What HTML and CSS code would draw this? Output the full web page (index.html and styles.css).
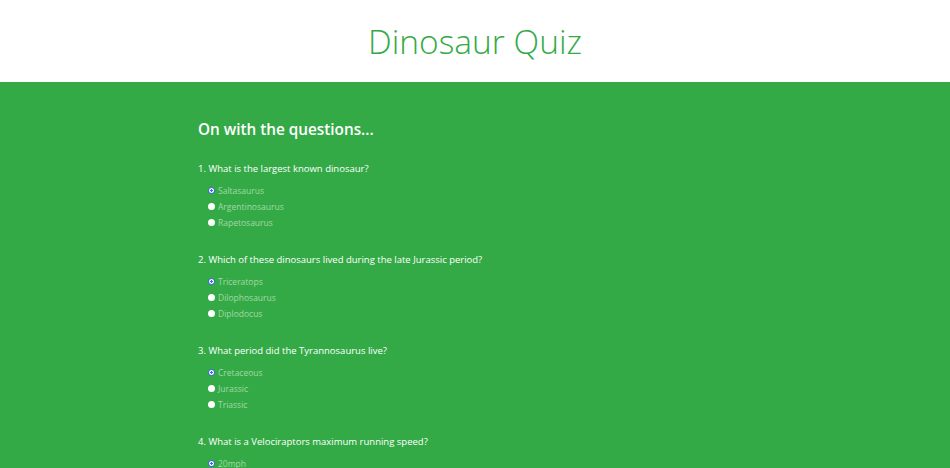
FILE: index.html
```html
<!DOCTYPE html>
<html lang="en">
<head>
<meta charset="utf-8">
<title>Dinosaur Quiz</title>
<link rel="stylesheet" href="styles.css">
</head>
<body>
<header class="site-header">
  <h1 class="site-title">Dinosaur Quiz</h1>
</header>
<main class="quiz">
  <div class="quiz-inner">
    <h2 class="quiz-heading">On with the questions...</h2>

    <section class="question">
      <p class="question-text">1. What is the largest known dinosaur?</p>
      <ul class="options">
        <li><label><input type="radio" name="q1" checked> Saltasaurus</label></li>
        <li><label><input type="radio" name="q1"> Argentinosaurus</label></li>
        <li><label><input type="radio" name="q1"> Rapetosaurus</label></li>
      </ul>
    </section>

    <section class="question">
      <p class="question-text">2. Which of these dinosaurs lived during the late Jurassic period?</p>
      <ul class="options">
        <li><label><input type="radio" name="q2" checked> Triceratops</label></li>
        <li><label><input type="radio" name="q2"> Dilophosaurus</label></li>
        <li><label><input type="radio" name="q2"> Diplodocus</label></li>
      </ul>
    </section>

    <section class="question">
      <p class="question-text">3. What period did the Tyrannosaurus live?</p>
      <ul class="options">
        <li><label><input type="radio" name="q3" checked> Cretaceous</label></li>
        <li><label><input type="radio" name="q3"> Jurassic</label></li>
        <li><label><input type="radio" name="q3"> Triassic</label></li>
      </ul>
    </section>

    <section class="question">
      <p class="question-text">4. What is a Velociraptors maximum running speed?</p>
      <ul class="options">
        <li><label><input type="radio" name="q4" checked> 20mph</label></li>
        <li><label><input type="radio" name="q4"> 40mph</label></li>
        <li><label><input type="radio" name="q4"> 60mph</label></li>
      </ul>
    </section>
  </div>
</main>
</body>
</html>
```
FILE: styles.css
```css
html, body {
  margin: 0;
  padding: 0;
}
body {
  font-family: "Open Sans", "Noto Sans", sans-serif;
  background: #34aa47;
}
.site-header {
  background: #ffffff;
  height: 82px;
  display: flex;
  align-items: center;
  justify-content: center;
}
.site-title {
  margin: 0;
  font-weight: 300;
  font-size: 33.5px;
  color: #34aa47;
}
.quiz {
  background: #34aa47;
  padding-top: 35px;
  min-height: 400px;
}
.quiz-inner {
  width: 554px;
  margin: 0 auto;
}
.quiz-heading {
  margin: 0 0 21px;
  font-size: 15.3px;
  font-weight: 600;
  color: #ffffff;
  line-height: 24px;
}
.question {
  margin-bottom: 23px;
}
.question-text {
  margin: 0 0 6px;
  font-size: 9.5px;
  color: #ffffff;
  line-height: 14px;
}
.options {
  list-style: none;
  margin: 0;
  padding: 0 0 0 10px;
}
.options li {
  height: 16px;
  display: flex;
  align-items: center;
}
.options label {
  display: flex;
  align-items: center;
  gap: 3px;
  font-size: 8.5px;
  color: #a3d8a6;
}
.options input {
  appearance: none;
  -webkit-appearance: none;
  margin: 0;
  width: 7px;
  height: 7px;
  border-radius: 50%;
  background: #ffffff;
  box-sizing: border-box;
}
.options input:checked {
  border: 1.5px solid #3d63f2;
  background: radial-gradient(circle, #3d63f2 0 1px, #ffffff 1.4px);
}
```
